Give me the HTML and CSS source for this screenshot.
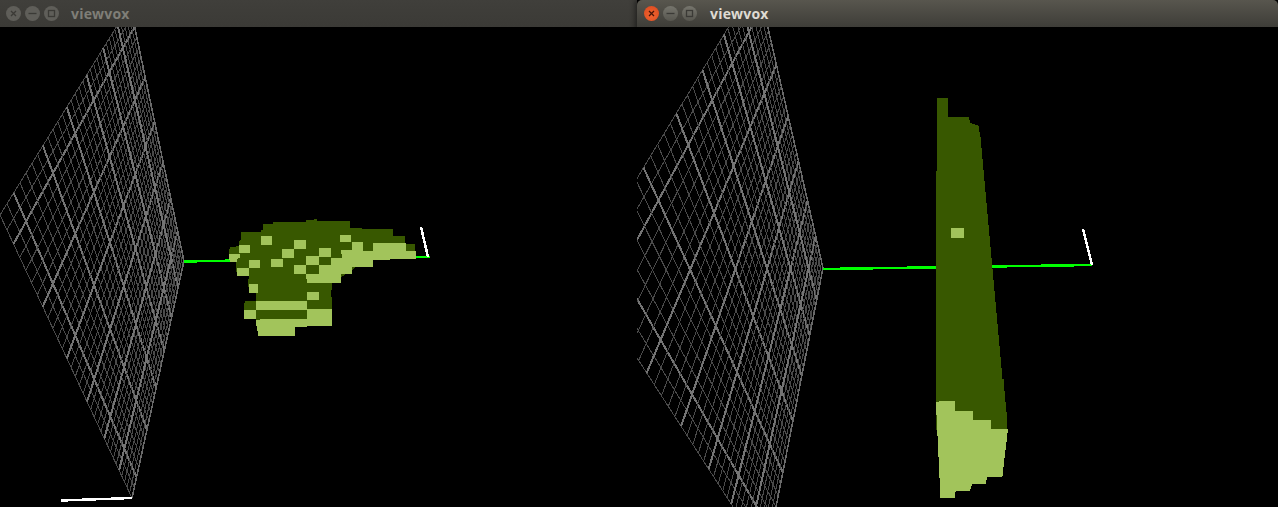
FILE: index.html
```html
<!DOCTYPE html>
<html lang="en">
<head>
<meta charset="utf-8">
<title>viewvox</title>
<link rel="stylesheet" href="styles.css">
</head>
<body>
<div class="desktop">
  <section class="window window-back">
    <header class="titlebar">
      <div class="controls">
        <span class="btn"><svg viewBox="0 0 15 15" class="glyph"><path d="M5 5l5 5M10 5l-5 5"/></svg></span>
        <span class="btn"><svg viewBox="0 0 15 15" class="glyph"><path d="M3.5 7.5h8"/></svg></span>
        <span class="btn"><svg viewBox="0 0 15 15" class="glyph"><rect x="4.5" y="4.5" width="6" height="6"/></svg></span>
      </div>
      <h1 class="title">viewvox</h1>
    </header>
    <div class="view">
      <svg class="scene" width="637" height="480" viewBox="0 0 637 480">
        <g class="grid" data-quad="0,188 132,471 184,234 130,-22"></g>
        <g class="axes">
          <line class="axis-green" x1="184" y1="234.5" x2="430" y2="230"/>
          <line class="axis-white" x1="421" y1="200" x2="428" y2="230"/>
          <line class="axis-white" x1="61" y1="473.5" x2="132" y2="471"/>
        </g>
        <g transform="translate(220 183) scale(0.33333)">
          <polygon class="vox-dark" points="130,42 160,42 160,36 258,36 258,30 282,30 282,27 292,27 292,33 390,33 390,54 426,54 426,57 520,57 520,78 556,78 556,102 586,102 586,130 460,130 396,180 336,220 333,262 336,262 336,300 261,300 261,330 108,330 108,327 75,327 72,285 75,273 108,273 108,248 87,248 84,215 87,198 51,198 48,174 50,150 30,156 27,123 30,112 57,108 57,93 62,90 62,66 124,66 124,60 130,60"/>
          <rect class="vox-light" x="123" y="78" width="33" height="27"/>
          <rect class="vox-light" x="222" y="90" width="36" height="27"/>
          <rect class="vox-light" x="186" y="118" width="36" height="26"/>
          <rect class="vox-light" x="57" y="105" width="33" height="25"/>
          <polygon class="vox-light" points="27,132 60,132 60,144 51,147 51,156 30,156 27,144"/>
          <rect class="vox-light" x="87" y="150" width="33" height="24"/>
          <rect class="vox-light" x="153" y="147" width="36" height="24"/>
          <rect class="vox-light" x="297" y="114" width="36" height="27"/>
          <rect class="vox-light" x="258" y="138" width="39" height="27"/>
          <rect class="vox-light" x="360" y="75" width="33" height="21"/>
          <rect class="vox-light" x="222" y="165" width="36" height="27"/>
          <rect class="vox-light" x="51" y="174" width="36" height="24"/>
          <rect class="vox-light" x="87" y="222" width="27" height="26"/>
          <rect class="vox-light" x="261" y="245" width="36" height="25"/>
          <rect class="vox-light" x="108" y="273" width="153" height="27"/>
          <rect class="vox-light" x="72" y="300" width="36" height="27"/>
          <polygon class="vox-light" points="108,330 135,327 261,327 261,297 336,297 336,348 261,348 261,351 225,351 225,378 114,378 111,348 108,348"/>
          <polygon class="vox-light" points="363,120 396,120 396,96 430,96 430,122 460,122 460,99 558,99 558,123 588,123 588,147 510,147 510,150 459,150 459,171 396,171 396,192 363,192 363,219 261,219 258,192 297,192 297,165 333,165 333,144 366,144"/>
        </g>
      </svg>
    </div>
  </section>
  <section class="window window-front">
    <header class="titlebar">
      <div class="controls">
        <span class="btn btn-close"><svg viewBox="0 0 15 15" class="glyph"><path d="M5 5l5 5M10 5l-5 5"/></svg></span>
        <span class="btn"><svg viewBox="0 0 15 15" class="glyph"><path d="M3.5 7.5h8"/></svg></span>
        <span class="btn"><svg viewBox="0 0 15 15" class="glyph"><rect x="4.5" y="4.5" width="6" height="6"/></svg></span>
      </div>
      <h1 class="title">viewvox</h1>
    </header>
    <div class="view">
      <svg class="scene" width="641" height="480" viewBox="637 27 641 480">
        <g class="grid" data-quad="581,271 766,558 823,268 757,-20"></g>
        <g class="axes">
          <line class="axis-green" x1="823" y1="269" x2="1092" y2="265"/>
          <line class="axis-white" x1="1083" y1="229" x2="1092" y2="265"/>
        </g>
        <polygon class="vox-dark" points="937,98 948,98 948,117 969,117 970,123 979,126 980,137 981,137 981,148 982,148 982,159 983,159 983,170 984,170 984,181 985,181 985,192 986,192 986,203 987,203 987,214 988,214 988,225 989,225 989,236 990,236 990,247 991,247 991,258 992,258 992,269 993,269 993,280 994,280 994,291 995,291 995,302 996,302 996,313 997,313 997,324 998,324 998,335 999,335 999,346 1000,346 1000,357 1001,357 1001,368 1002,368 1002,379 1004,379 1004,391 1005,391 1005,402 1006,402 1006,412 1007,412 1007,430 936,430 936,171 937,171"/>
        <rect class="vox-light" x="951" y="228" width="13" height="10"/>
        <g transform="translate(920 380) scale(0.33333)">
          <polygon class="vox-light" points="48,66 57,66 57,63 105,63 105,93 159,93 159,120 213,120 213,147 264,147 264,160 261,160 261,186 258,186 258,210 255,210 255,234 252,234 252,260 249,260 249,285 246,291 201,291 198,312 156,312 153,324 150,333 114,333 105,336 105,354 60,354 60,294 57,294 57,231 54,231 54,168 51,168 51,105 48,105"/>
        </g>
      </svg>
    </div>
  </section>
</div>
<script src="app.js"></script>
</body>
</html>
```
FILE: styles.css
```css
* { box-sizing: border-box; }
html, body { margin: 0; padding: 0; background: #000; }
body { overflow: hidden; }
.desktop { display: flex; width: 1278px; height: 507px; }
.window { display: flex; flex-direction: column; height: 507px; }
.window-back { width: 637px; }
.window-front { width: 641px; position: relative; box-shadow: -2px 0 5px rgba(0, 0, 0, .45); }
.titlebar { display: flex; align-items: center; height: 27px; flex: none; padding-left: 6px; }
.window-back .titlebar { background: linear-gradient(#403f3b, #3b3a36); }
.window-front .titlebar { padding-left: 7px; border-radius: 5px 5px 0 0; background: linear-gradient(#58564e, #3e3d38); }
.controls { display: flex; gap: 4px; }
.btn { display: block; width: 15px; height: 15px; border-radius: 50%; background: #5f5e59; }
.window-front .btn { background: linear-gradient(#76756d, #57564f); }
.window-front .btn-close { background: radial-gradient(circle at 50% 60%, #f0642f, #d9481f); }
.glyph { display: block; width: 15px; height: 15px; fill: none; stroke: #3b3a36; stroke-width: 1.3; }
.btn-close .glyph { stroke: #4a1508; }
.title { margin: 0 0 0 12px; font: 700 14px/27px "Open Sans", "Noto Sans", sans-serif; letter-spacing: .2px; color: #7f7e77; }
.window-front .title { color: #dfdbd2; margin-left: 13px; }
.view { flex: 1; overflow: hidden; background: #000; }
.scene { display: block; shape-rendering: crispEdges; }
.grid line { stroke: #4a4a4a; stroke-width: 1; }
.grid line.major { stroke: #747474; stroke-width: 2; }
.grid line.edge { stroke: #6a6a6a; stroke-width: 1.5; }
.axis-green { stroke: #00ff00; stroke-width: 2.5; }
.axis-white { stroke: #fff; stroke-width: 2.5; }
.vox-dark { fill: #385800; }
.vox-light { fill: #a2c45b; }
```
FILE: app.js
```js
// Draws the perspective voxel grid for each view from its four corner points.
var SVG_NS = "http://www.w3.org/2000/svg";
var CELLS = 32;

function squareToQuad(q) {
  var dx1 = q[1][0] - q[2][0], dx2 = q[3][0] - q[2][0], sx = q[0][0] - q[1][0] + q[2][0] - q[3][0];
  var dy1 = q[1][1] - q[2][1], dy2 = q[3][1] - q[2][1], sy = q[0][1] - q[1][1] + q[2][1] - q[3][1];
  var det = dx1 * dy2 - dx2 * dy1;
  var g = (sx * dy2 - dx2 * sy) / det, h = (dx1 * sy - sx * dy1) / det;
  return function (u, v) {
    var w = g * u + h * v + 1;
    return [
      ((q[1][0] - q[0][0] + g * q[1][0]) * u + (q[3][0] - q[0][0] + h * q[3][0]) * v + q[0][0]) / w,
      ((q[1][1] - q[0][1] + g * q[1][1]) * u + (q[3][1] - q[0][1] + h * q[3][1]) * v + q[0][1]) / w
    ];
  };
}

function addLine(group, a, b, cls) {
  var l = document.createElementNS(SVG_NS, "line");
  l.setAttribute("x1", a[0].toFixed(1));
  l.setAttribute("y1", a[1].toFixed(1));
  l.setAttribute("x2", b[0].toFixed(1));
  l.setAttribute("y2", b[1].toFixed(1));
  if (cls) l.setAttribute("class", cls);
  group.appendChild(l);
}

document.querySelectorAll(".grid").forEach(function (group) {
  var quad = group.getAttribute("data-quad").split(" ").map(function (p) {
    return p.split(",").map(Number);
  });
  var map = squareToQuad(quad);
  for (var k = 0; k <= CELLS; k++) {
    var t = k / CELLS;
    var cls = k === CELLS ? "edge" : (k % 5 === 2 ? "major" : "");
    addLine(group, map(t, 0), map(t, 1), cls);
    addLine(group, map(0, t), map(1, t), cls);
  }
});
```
